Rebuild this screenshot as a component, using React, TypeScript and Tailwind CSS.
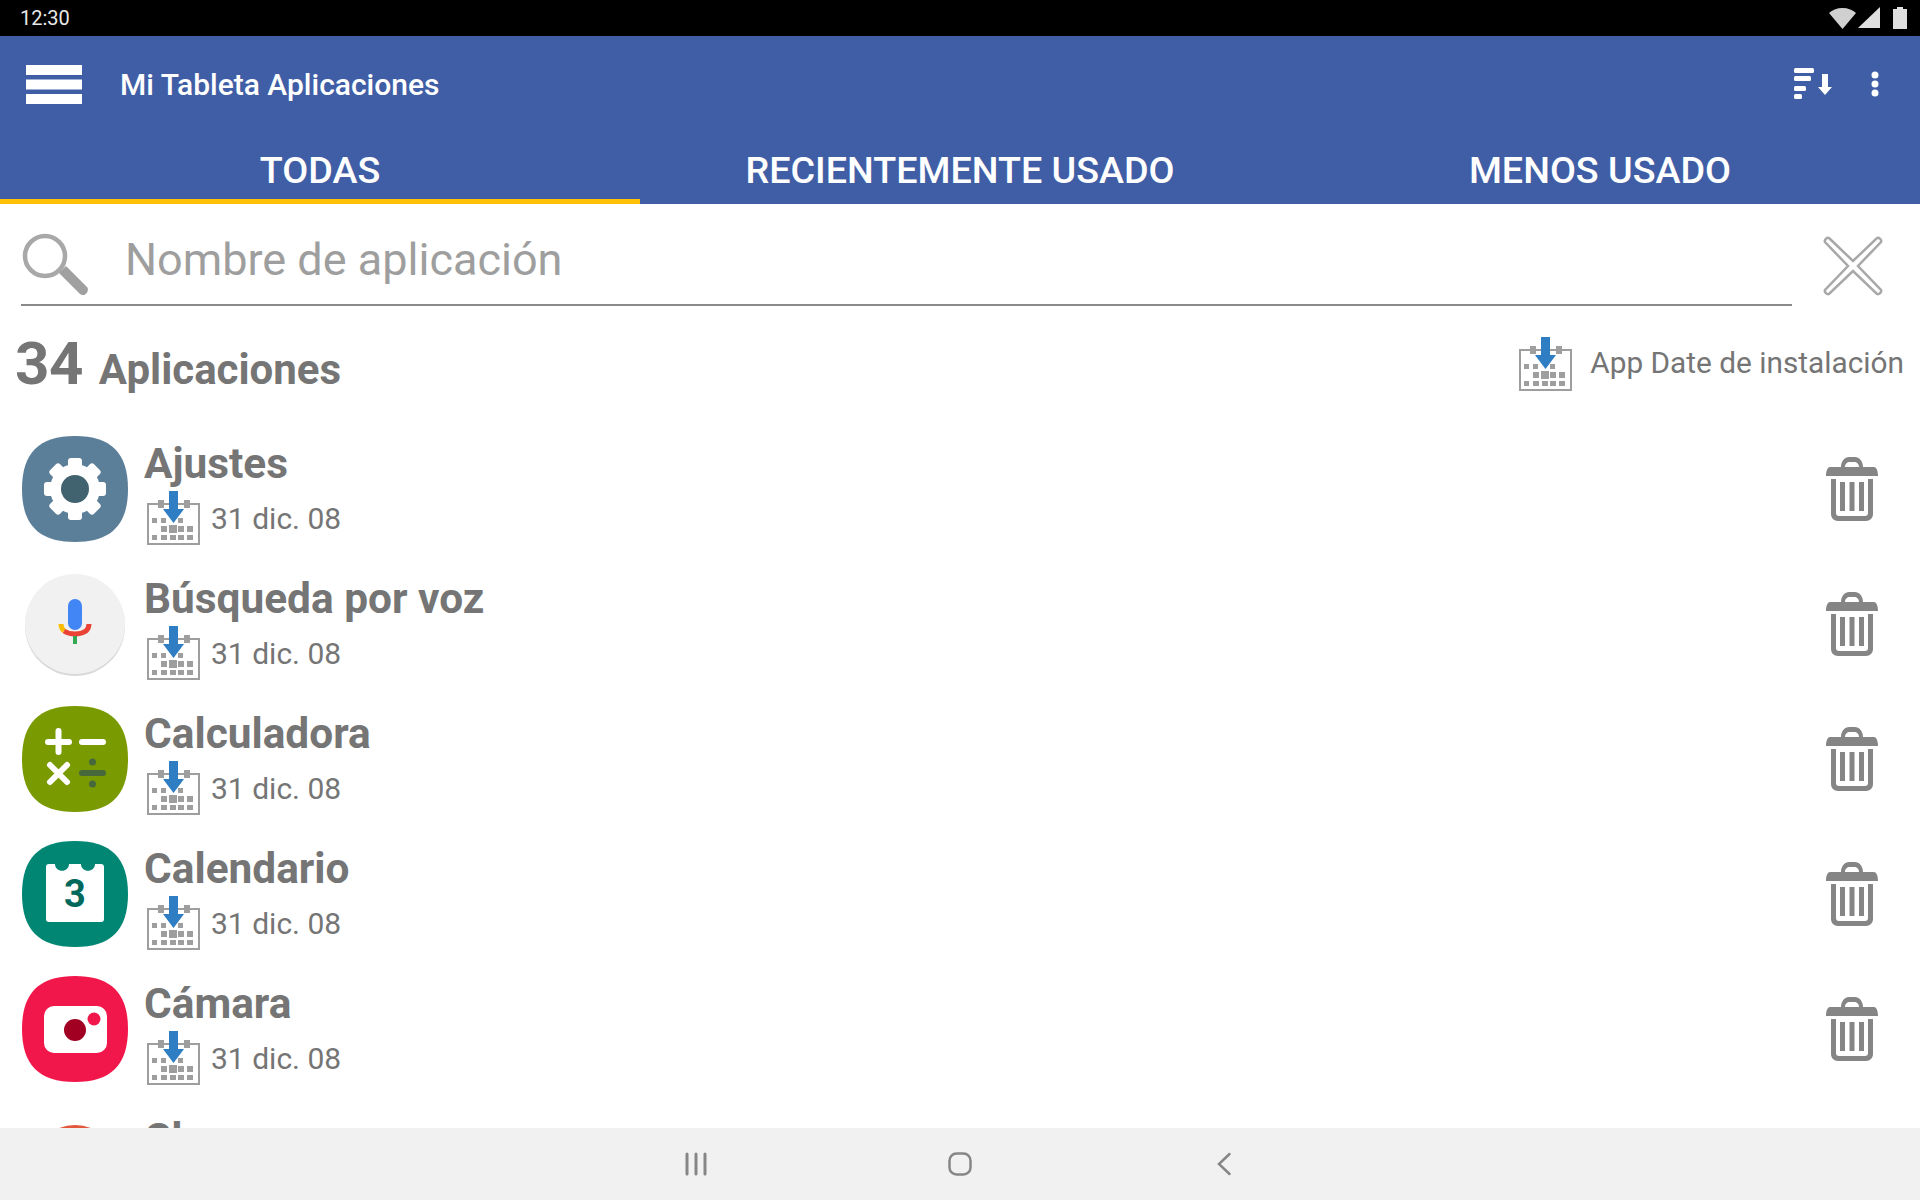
import React from 'react'

const SQUIRCLE = 'M53 0C89 0 106 17 106 53S89 106 53 106S0 89 0 53S17 0 53 0Z'

const CalendarIcon = () => (
  <svg className="shrink-0" width="53" height="54" viewBox="0 0 53 54">
    <rect x="1" y="13" width="51" height="40" fill="#fff" stroke="#9e9e9e" strokeWidth="2" />
    <rect x="11" y="9" width="6" height="8" fill="#9e9e9e" />
    <rect x="37" y="9" width="6" height="8" fill="#9e9e9e" />
    <g fill="#9e9e9e">
      <rect x="5" y="27" width="5" height="5" />
      <rect x="14" y="27" width="5" height="5" />
      <rect x="31" y="27" width="5" height="5" />
      <rect x="14" y="35" width="6" height="6" />
      <rect x="22" y="34" width="8" height="8" />
      <rect x="31" y="35" width="6" height="6" />
      <rect x="40" y="35" width="6" height="6" />
      <rect x="5" y="44" width="5" height="5" />
      <rect x="14" y="44" width="6" height="5" />
      <rect x="23" y="44" width="6" height="5" />
      <rect x="31" y="44" width="6" height="5" />
      <rect x="40" y="44" width="6" height="5" />
    </g>
    <path d="M22 0h9v18h6L26.500 32 16 18h6Z" fill="#2f7ec3" />
  </svg>
)

const TrashIcon = () => (
  <svg width="52" height="64" viewBox="0 0 52 64" fill="#858585">
    <path d="M15 10C15 4 19 0 23 0h6c4 0 8 4 8 10h11c2 0 4 3 4 9H0c0-6 2-9 4-9ZM19 10h14c0-3-2-5-5-5h-4c-3 0-5 2-5 5Z" fillRule="evenodd" />
    <path d="M5 22h5v34c0 2 1 3 3 3h26c2 0 3-1 3-3V22h5v35c0 4-3 7-7 7H12c-4 0-7-3-7-7Z" />
    <rect x="14" y="25" width="5" height="29" />
    <rect x="23.500" y="25" width="5" height="29" />
    <rect x="33" y="25" width="5" height="29" />
  </svg>
)

const SettingsIcon = () => (
  <svg width="106" height="106" viewBox="0 0 106 106">
    <path d={SQUIRCLE} fill="#5b7e99" />
    <g fill="#fff">
      <circle cx="53" cy="53" r="25" />
      {[0, 45, 90, 135, 180, 225, 270, 315].map((a) => (
        <rect key={a} x="46" y="22" width="14" height="12" rx="3" transform={`rotate(${a} 53 53)`} />
      ))}
    </g>
    <circle cx="53" cy="53" r="14" fill="#41636f" />
  </svg>
)

const VoiceIcon = () => (
  <svg width="106" height="106" viewBox="0 0 106 106">
    <circle cx="53" cy="55" r="50" fill="#d9d9d9" />
    <circle cx="53" cy="53" r="50" fill="#f1f1f1" />
    <rect x="46" y="28" width="14" height="31" rx="7" fill="#4285f4" />
    <path d="M39 53c0 3 1 5 3 7" fill="none" stroke="#fbbc05" strokeWidth="5" />
    <path d="M42 60c3 2 7 3 11 3s8-1 11-3c2-2 3-4 3-7" fill="none" stroke="#ea4335" strokeWidth="5" />
    <rect x="51" y="65" width="4" height="8" fill="#34a853" />
  </svg>
)

const CalculatorIcon = () => (
  <svg width="106" height="106" viewBox="0 0 106 106">
    <path d={SQUIRCLE} fill="#7a9a01" />
    <g stroke="#fff" strokeWidth="6" strokeLinecap="round">
      <path d="M26 36h21M36.500 25v21M60 36h21" />
      <path d="M28 59l17 17M45 59L28 76" />
    </g>
    <path d="M60 67h21" stroke="#46683a" strokeWidth="6" strokeLinecap="round" />
    <circle cx="70.500" cy="56" r="3.500" fill="#46683a" />
    <circle cx="70.500" cy="78" r="3.500" fill="#46683a" />
  </svg>
)

const CalendarAppIcon = () => (
  <svg width="106" height="106" viewBox="0 0 106 106">
    <path d={SQUIRCLE} fill="#018673" />
    <path
      d="M27 23h6c0 9 14 9 14 0h12c0 9 14 9 14 0h6c2 0 3 1 3 3v52c0 2-1 3-3 3H27c-2 0-3-1-3-3V26c0-2 1-3 3-3Z"
      fill="#fff"
    />
    <text x="53" y="66" textAnchor="middle" fontFamily="Roboto, sans-serif" fontWeight="700" fontSize="38" fill="#01695c">
      3
    </text>
  </svg>
)

const CameraIcon = () => (
  <svg width="106" height="106" viewBox="0 0 106 106">
    <path d={SQUIRCLE} fill="#f2174b" />
    <rect x="22" y="30" width="63" height="47" rx="10" fill="#fff" />
    <circle cx="53" cy="54" r="11" fill="#a10022" />
    <circle cx="72" cy="43" r="6.500" fill="#f2174b" />
  </svg>
)

const ChromeIcon = () => (
  <svg width="106" height="106" viewBox="0 0 106 106">
    <circle cx="53" cy="57" r="43" fill="#e2573c" />
  </svg>
)

const apps = [
  { icon: <SettingsIcon />, name: 'Ajustes' },
  { icon: <VoiceIcon />, name: 'Búsqueda por voz' },
  { icon: <CalculatorIcon />, name: 'Calculadora' },
  { icon: <CalendarAppIcon />, name: 'Calendario' },
  { icon: <CameraIcon />, name: 'Cámara' },
  { icon: <ChromeIcon />, name: 'Chrome' },
]

const App: React.FC = () => {
  return (
    <div className="w-[1920px] h-[1200px] flex flex-col overflow-hidden bg-white font-['Roboto',sans-serif]">
      {/* Status bar */}
      <div className="h-9 shrink-0 bg-black flex items-center justify-between pl-5 pr-[13px]">
        <span className="text-[20px] text-[#e8e8e8]">12:30</span>
        <div className="flex items-center">
          <svg width="27" height="22" viewBox="0 0 27 22" fill="#d0d0d0">
            <path d="M0 6C3 3 8 1 13.500 1S24 3 27 6L13.500 22Z" />
          </svg>
          <svg className="ml-[2px]" width="22" height="22" viewBox="0 0 22 22" fill="#e0e0e0">
            <path d="M22 0v21H0Z" />
          </svg>
          <svg className="ml-[13px]" width="14" height="22" viewBox="0 0 14 22" fill="#e0e0e0">
            <path d="M4 0h6v2h4v20H0V2h4Z" />
          </svg>
        </div>
      </div>

      {/* App bar */}
      <div className="h-[96px] shrink-0 bg-[#3f5ea6] flex items-center pl-[26px] pr-[41px]">
        <svg width="56" height="39" viewBox="0 0 56 39" fill="#fff">
          <rect y="0" width="56" height="10" />
          <rect y="14.500" width="56" height="10" />
          <rect y="29" width="56" height="10" />
        </svg>
        <h1 className="ml-[38px] flex-1 text-[30px] font-medium text-white">Mi Tableta Aplicaciones</h1>
        <svg width="38" height="32" viewBox="0 0 38 32" fill="#fff">
          <rect x="0" y="0" width="20" height="5" rx="1.500" />
          <rect x="0" y="8" width="17" height="5" rx="1.500" />
          <rect x="0" y="18" width="12" height="5" rx="1.500" />
          <rect x="0" y="26" width="8" height="5" rx="1.500" />
          <path d="M28 6h6v13h4l-7 8-7-8h4Z" />
        </svg>
        <svg className="ml-[39px]" width="8" height="26" viewBox="0 0 8 26" fill="#fff">
          <circle cx="4" cy="4" r="3.500" />
          <circle cx="4" cy="13" r="3.500" />
          <circle cx="4" cy="22" r="3.500" />
        </svg>
      </div>

      {/* Tabs */}
      <div className="h-[72px] shrink-0 bg-[#3f5ea6] grid grid-cols-3 text-[37.700px] font-medium text-white">
        <div className="flex items-center justify-center pt-[9px] border-b-[5px] border-[#ffc107]">TODAS</div>
        <div className="flex items-center justify-center pt-[4px]">RECIENTEMENTE USADO</div>
        <div className="flex items-center justify-center pt-[4px]">MENOS USADO</div>
      </div>

      {/* Search */}
      <div className="h-[102px] shrink-0 flex items-start pl-[21px] pr-[37px]">
        <div className="flex-1 h-full flex items-center border-b-2 border-[#8a8a8a]">
          <svg className="shrink-0 mt-[22px]" width="68" height="68" viewBox="0 0 68 68">
            <circle cx="24" cy="25" r="20" fill="none" stroke="#a8a8a8" strokeWidth="4.500" />
            <path d="M38 42l7-7 21 21c3 3-2 11-7 7Z" fill="#a0a0a0" />
          </svg>
          <span className="ml-[36px] pt-[12px] text-[45px] text-[#9e9e9e]">Nombre de aplicación</span>
        </div>
        <svg className="ml-[31px] mt-[32px]" width="60" height="60" viewBox="0 0 60 60">
          <path
            d="M6 2L30 25L54 2C56 1 59 4 58 6L35 30L58 54C59 56 56 59 54 58L30 35L6 58C4 59 1 56 2 54L25 30L2 6C1 4 4 1 6 2Z"
            fill="#fff"
            stroke="#a8a8a8"
            strokeWidth="2.500"
          />
        </svg>
      </div>

      {/* Count */}
      <div className="h-[115px] shrink-0 flex items-center justify-between pl-[15px] pr-4">
        <div className="flex items-baseline text-[#757575] font-bold">
          <span className="text-[60px] tracking-[-0.5px]">34</span>
          <span className="ml-4 text-[42px]">Aplicaciones</span>
        </div>
        <div className="flex items-center">
          <CalendarIcon />
          <span className="ml-[18px] text-[29.800px] text-[#757575]">App Date de instalación</span>
        </div>
      </div>

      {/* List */}
      <div className="flex-1 overflow-hidden">
        {apps.map((app) => (
          <div className="h-[135px] flex items-center pl-[22px] pr-[42px]" key={app.name}>
            {app.icon}
            <div className="ml-4 pt-[7px] flex-1 flex flex-col">
              <span className="text-[42.400px] leading-[50px] font-bold text-[#757575]">{app.name}</span>
              <div className="flex items-center pl-[3px] mt-[2px]">
                <CalendarIcon />
                <span className="ml-[11px] text-[30px] text-[#757575]">31 dic. 08</span>
              </div>
            </div>
            <TrashIcon />
          </div>
        ))}
      </div>

      {/* Navigation bar */}
      <div className="h-[72px] shrink-0 bg-[#f1f1f1] flex items-center justify-center">
        <div className="w-[264px] flex justify-center">
          <svg width="24" height="24" viewBox="0 0 24 24" stroke="#868686" strokeWidth="3" strokeLinecap="round">
            <path d="M3 2v20M12 2v20M21 2v20" />
          </svg>
        </div>
        <div className="w-[264px] flex justify-center">
          <svg width="24" height="24" viewBox="0 0 24 24" fill="none" stroke="#868686" strokeWidth="2.500">
            <rect x="1.500" y="1.500" width="21" height="21" rx="7" />
          </svg>
        </div>
        <div className="w-[264px] flex justify-center">
          <svg width="14" height="24" viewBox="0 0 14 24" fill="none" stroke="#868686" strokeWidth="2.500" strokeLinecap="round">
            <path d="M12.500 2L2 12l10.500 10" />
          </svg>
        </div>
      </div>
    </div>
  )
}

export default App
